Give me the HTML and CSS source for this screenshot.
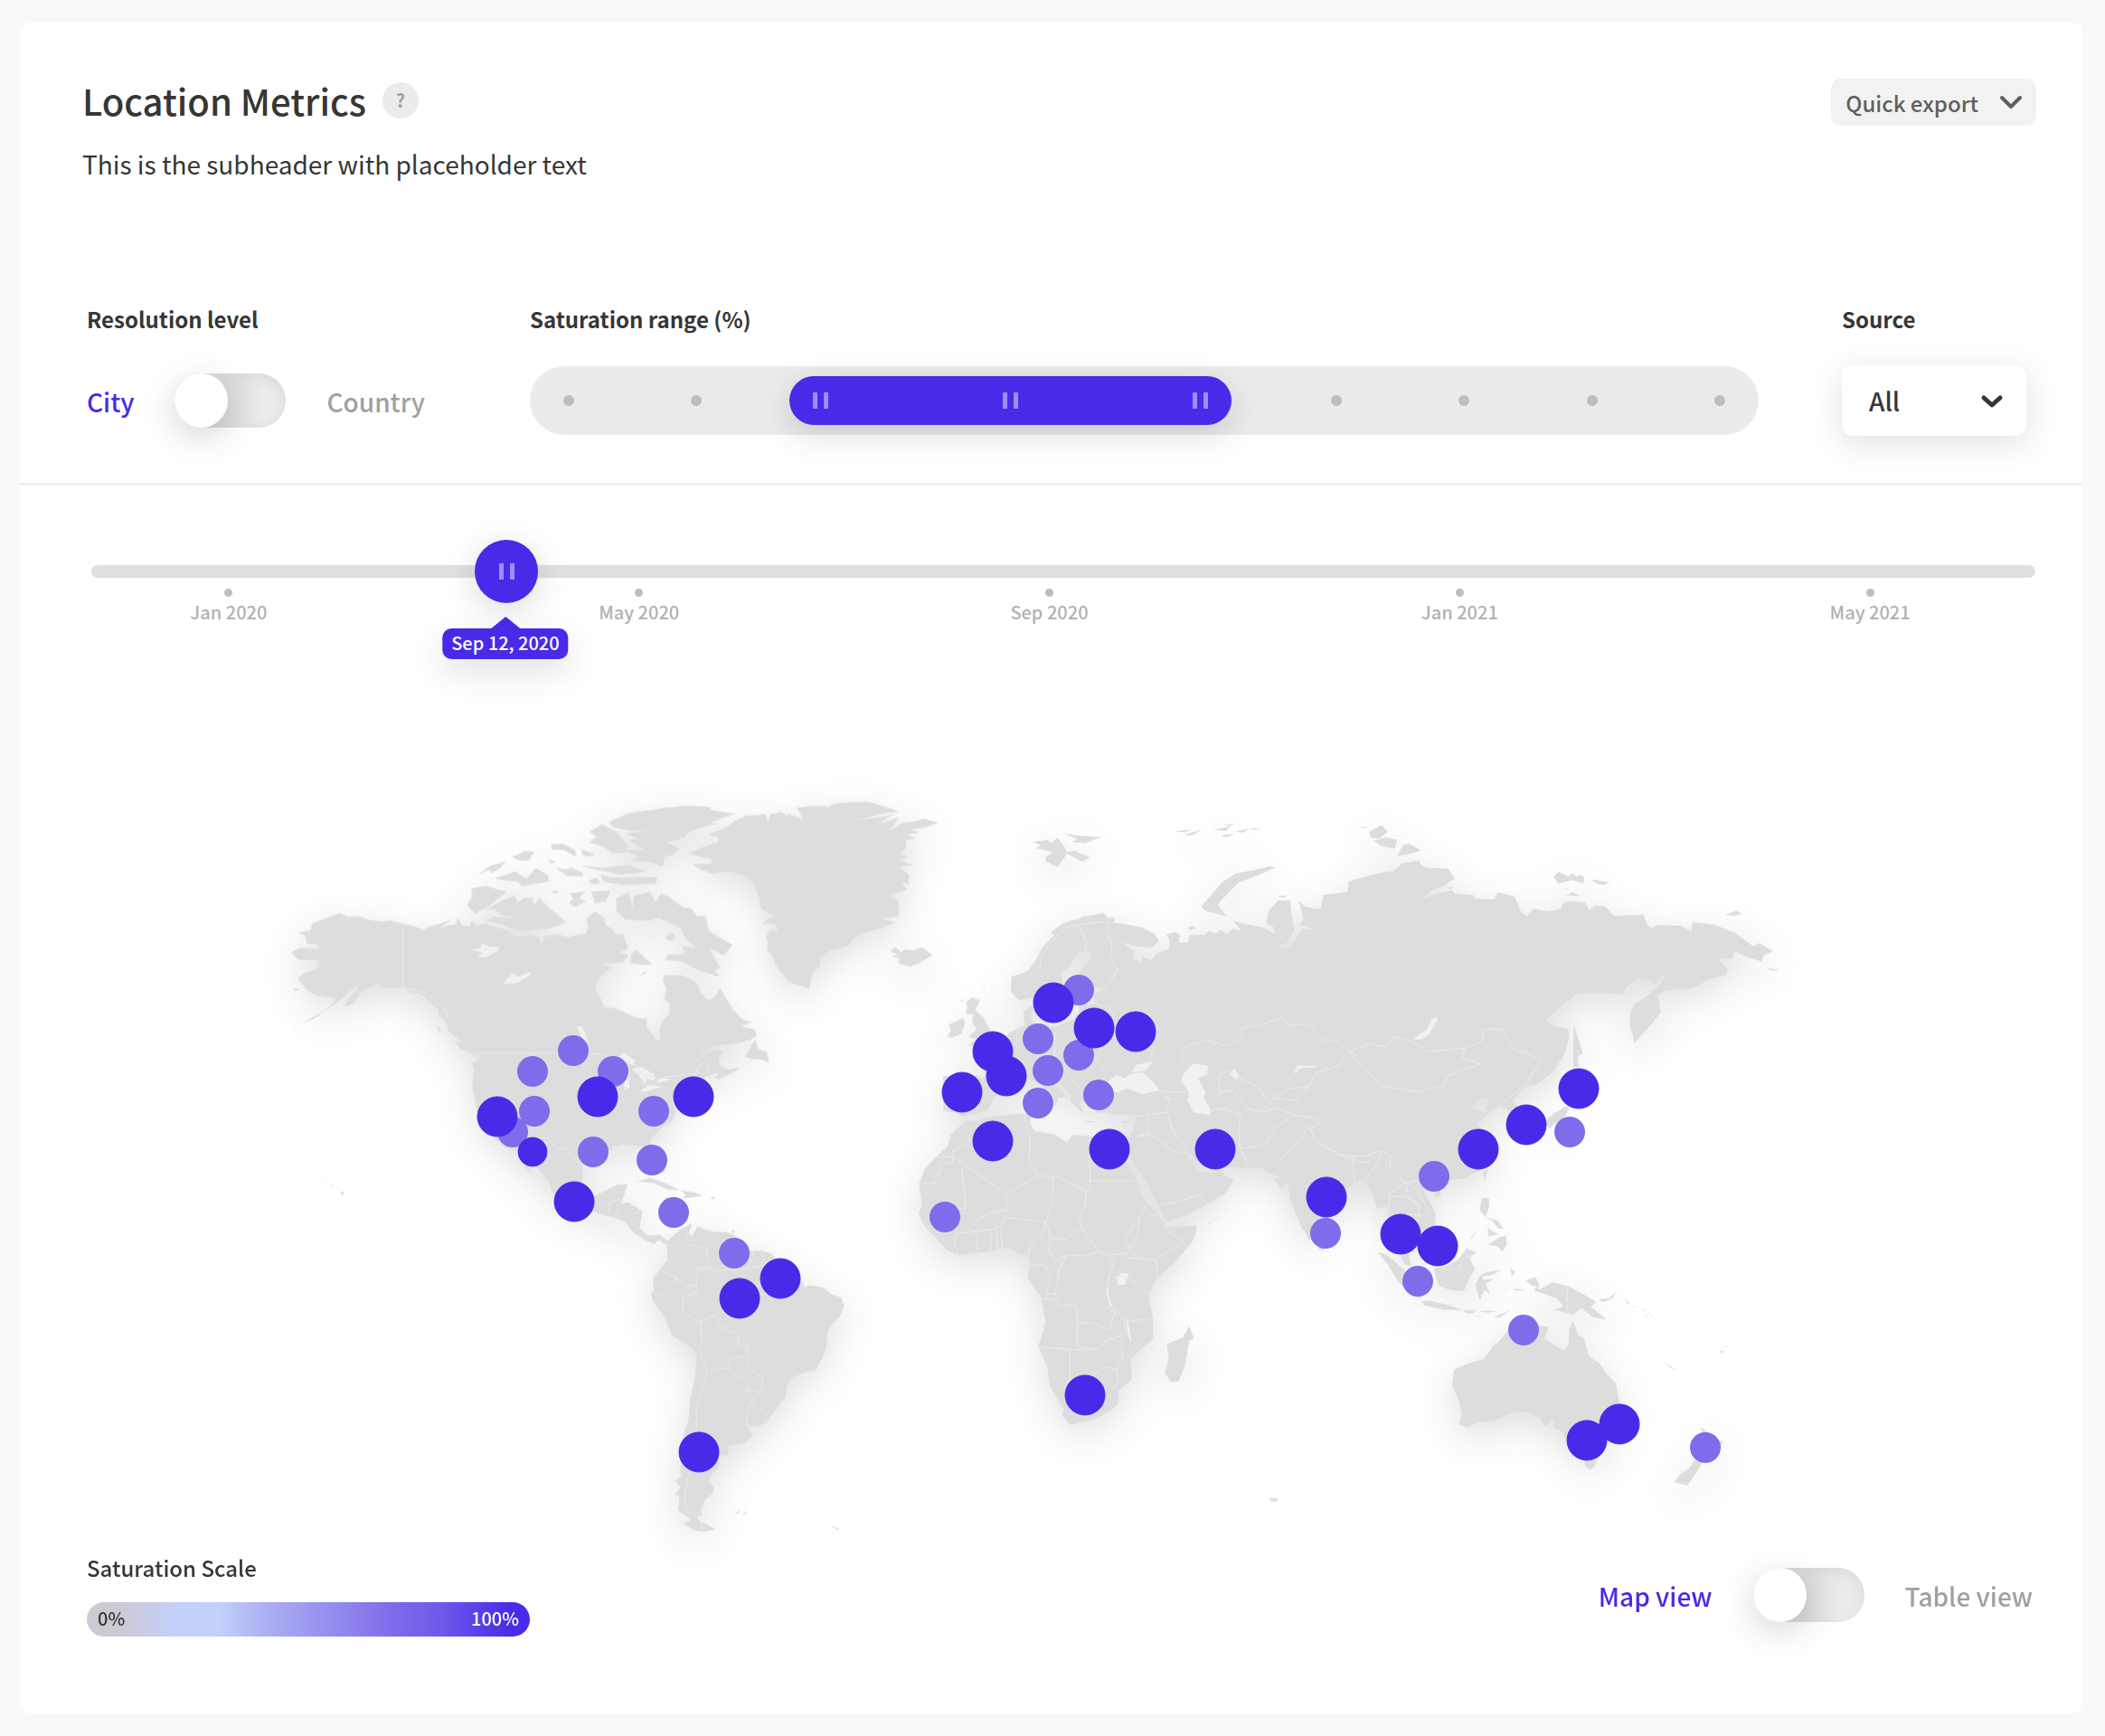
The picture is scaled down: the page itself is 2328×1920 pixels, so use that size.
FILE: index.html
```html
<!DOCTYPE html>
<html lang="en">
<head>
<meta charset="utf-8">
<meta name="viewport" content="width=device-width, initial-scale=1">
<title>Location Metrics</title>
<link rel="stylesheet" href="styles.css">
</head>
<body>
<main class="card">
  <header class="card-header">
    <div class="heading">
      <div class="title-row">
        <h1 class="title">Location Metrics</h1>
        <button class="help" type="button" aria-label="Help">?</button>
      </div>
      <p class="subheader">This is the subheader with placeholder text</p>
    </div>
    <button class="export" type="button">Quick export
      <svg class="chevron" viewBox="0 0 24 14" aria-hidden="true"><path d="M2 2l10 10L22 2"/></svg>
    </button>
  </header>

  <section class="controls">
    <div class="control">
      <h2 class="control-label">Resolution level</h2>
      <div class="control-body switch-row">
        <span class="switch-text switch-text-active">City</span>
        <input class="switch" type="checkbox" role="switch" aria-label="Show countries">
        <span class="switch-text">Country</span>
      </div>
    </div>
    <div class="control">
      <h2 class="control-label" id="range-label">Saturation range (%)</h2>
      <div class="control-body">
        <div class="range" role="group" aria-labelledby="range-label">
          <i class="range-dot"></i><i class="range-dot"></i><i class="range-dot"></i><i class="range-dot"></i><i class="range-dot"></i>
          <i class="range-dot"></i><i class="range-dot"></i><i class="range-dot"></i><i class="range-dot"></i><i class="range-dot"></i>
          <span class="range-fill" style="left:21.1%;width:36%"><i class="grip"></i></span>
          <input class="range-input" type="range" min="0" max="100" step="0.1" value="23.3" aria-label="Minimum saturation">
          <input class="range-input" type="range" min="0" max="100" step="0.1" value="54.6" aria-label="Maximum saturation">
        </div>
      </div>
    </div>
    <div class="control">
      <label class="control-label" for="source">Source</label>
      <div class="control-body">
        <div class="select">
          <select class="select-input" id="source"><option>All</option></select>
          <svg class="chevron chevron-bold select-icon" viewBox="0 0 24 14" aria-hidden="true"><path d="M3 3l9 8 9-8"/></svg>
        </div>
      </div>
    </div>
  </section>

  <section class="timeline">
    <div class="timeline-track">
      <input class="timeline-input" type="range" min="0" max="100" step="0.1" value="20.4" aria-label="Date">
      <output class="timeline-tip" style="left:21.3%">Sep 12, 2020</output>
    </div>
    <ol class="ticks">
      <li class="tick">Jan 2020</li>
      <li class="tick">May 2020</li>
      <li class="tick">Sep 2020</li>
      <li class="tick">Jan 2021</li>
      <li class="tick">May 2021</li>
    </ol>
  </section>

  <svg class="map" viewBox="22 689 2281 1029" role="img" aria-label="World map of saturation by city">
    <g class="land">
      <!-- North America -->
      <g transform="translate(300 860) scale(.39541 .33333)">
        <path d="M190 450L215 462 245 460 270 472 310 478 335 474 372 487 400 493 425 507 440 496 470 486 500 474 470 500 498 490 515 488 522 466 535 490 555 495 560 475 575 490 600 485 640 500 670 512 680 527 700 528 730 520 750 535 755 552 765 528 800 520 830 530 860 522 880 520 887 490 880 470 905 445 930 462 935 490 950 500 965 520 985 520 990 545 1000 565 975 580 1000 588 985 612 920 618 950 630 915 665 905 700 920 730 930 762 960 765 990 780 1020 797 1050 800 1050 830 1065 850 1075 873 1090 868 1085 840 1095 805 1115 785 1115 750 1100 735 1105 700 1095 675 1100 655 1150 657 1175 670 1195 690 1200 715 1222 738 1240 730 1255 697 1275 740 1290 768 1320 805 1345 812 1312 826 1350 835 1358 855 1340 870 1300 882 1240 888 1210 910 1185 945 1215 915 1250 905 1265 912 1250 930 1255 955 1275 968 1308 965 1290 980 1250 1002 1240 995 1255 978 1230 985 1200 1000 1180 1015 1160 1040 1120 1075 1130 1110 1120 1140 1090 1165 1065 1195 1058 1215 1085 1260 1102 1295 1098 1313 1085 1300 1062 1255 1045 1225 1020 1222 985 1215 950 1225 955 1240 920 1230 890 1250 870 1280 870 1335 880 1365 905 1400 940 1397 955 1370 965 1352 995 1350 990 1375 980 1400 970 1415 1000 1410 1040 1440 930 1442 880 1436 840 1425 805 1390 785 1375 778 1345 750 1300 715 1270 705 1262 718 1290 732 1322 715 1300 700 1270 690 1240 650 1225 620 1190 580 1130 572 1085 562 1020 568 965 560 945 580 940 583 920 560 905 540 890 515 860 495 840 490 810 470 790 465 765 440 740 420 715 395 715 372 698 330 697 310 700 300 685 285 690 270 700 250 712 230 750 205 760 215 735 240 705 245 685 262 678 235 690 210 720 190 740 160 765 125 795 90 815 115 795 150 775 175 745 180 730 150 728 125 722 100 705 92 690 75 670 90 650 115 640 135 628 130 605 75 605 57 580 80 565 140 567 125 553 100 550 95 525 75 515 110 507 115 485 150 468Z"/>
        <path d="M560 368L600 360 660 380 630 405 605 430 570 450 548 425 562 395ZM600 440L640 412 680 390 690 415 705 400 730 398 735 425 750 400 775 430 795 450 825 480 790 497 750 505 700 510 670 500 640 485 600 475 620 462 700 467 640 455 625 435ZM583 318L610 295 655 278 640 300 615 318 612 305ZM625 335L680 312 715 335 740 300 775 325 775 345 700 360 690 345 650 340ZM675 265L710 243 735 247 720 275 695 275ZM783 222L815 220 850 240 852 262 820 240 785 238ZM775 272L795 280 780 285ZM798 300L820 305 840 300 870 315 870 328 825 325ZM783 378L805 375 795 385ZM835 385L880 375 860 400 880 410 850 430 832 415 845 402ZM868 238L905 255 885 262 870 255ZM888 340L912 333 920 350 895 353ZM895 378L950 375 935 410 905 418 900 395ZM920 320L945 330 985 332 1080 330 1075 352 980 355 930 345ZM865 293L930 300 960 295 1000 290 1050 312 980 322 930 310ZM890 180L925 155 965 180 1000 225 985 250 955 250 930 230 890 215 910 195ZM945 148L1000 118 1060 108 1100 100 1160 95 1225 98 1230 108 1295 120 1225 150 1250 152 1200 165 1165 182 1155 200 1105 215 1140 235 1125 255 1100 262 1095 295 1060 280 1010 275 1030 262 980 240 1045 240 995 205 1030 205 990 185 1030 180 1085 165 1040 175 1000 175 955 165ZM965 400L1000 382 1010 440 1015 390 1060 380 1075 415 1090 385 1110 395 1150 430 1175 435 1190 460 1215 460 1220 490 1225 510 1290 555 1265 590 1225 565 1255 630 1240 640 1255 660 1195 640 1150 610 1100 605 1110 588 1160 585 1150 560 1190 565 1160 535 1145 500 1085 465 1050 475 990 470 965 440ZM1005 590L1020 570 1065 620 1040 622 1005 615ZM1105 525L1120 513 1132 530 1120 542 1108 538ZM1035 650L1052 642 1040 655ZM1325 925L1345 885 1355 870 1360 900 1385 910 1392 945 1370 935 1345 935ZM515 875L550 890 582 940 560 915 530 900ZM462 825L475 835 472 848ZM1025 1340L1060 1328 1100 1345 1140 1368 1110 1367 1070 1345ZM1145 1370L1180 1375 1208 1388 1175 1392 1150 1397 1160 1385ZM1226 1393L1242 1394 1236 1399ZM193 1372L205 1378 198 1387ZM165 1350L173 1355ZM148 1341L155 1344ZM185 1360L190 1363ZM60 700L80 703 70 708ZM60 830L70 822Z"/>
      </g>
      <!-- Greenland, Iceland, British Isles -->
      <g transform="translate(640 860) scale(.33333)">
        <path d="M515 145L555 127 600 125 620 120 628 150 635 122 670 115 700 132 690 117 745 140 725 100 780 95 835 97 840 88 900 82 960 80 1010 95 1060 112 1000 122 910 143 990 134 1045 122 985 157 1062 132 1032 177 1075 150 1100 148 1150 137 1192 150 1150 165 1100 172 1130 182 1085 190 1118 200 1085 208 1085 235 1065 250 1090 265 1060 275 1110 290 1060 297 1095 320 1095 355 1070 345 1090 372 1016 392 1060 405 1062 460 1000 468 1050 480 985 505 925 520 890 560 840 570 800 595 800 625 775 650 765 700 740 690 700 680 665 640 640 590 625 570 630 545 620 530 635 505 660 510 655 485 610 485 625 470 655 462 605 435 600 400 580 350 550 325 500 310 445 318 405 305 380 288 440 285 440 270 362 252 400 235 465 215 462 195 430 190 490 165Z"/>
        <path d="M1035 575L1050 562 1070 580 1082 570 1110 574 1140 563 1152 572 1172 590 1140 610 1100 627 1060 615 1065 600 1040 592 1060 588ZM1285 745L1305 730 1332 740 1315 770 1345 800 1365 840 1390 860 1330 885 1290 890 1320 870 1295 860 1320 835 1305 810 1310 785 1285 785 1290 760ZM1222 860L1235 840 1228 820 1275 798 1282 815 1270 848 1240 862ZM1268 740L1278 735 1272 745ZM1343 690L1348 692 1345 698Z"/>
      </g>
      <!-- Central and South America -->
      <g transform="translate(680 1240) scale(.33333)">
        <path d="M-110 270L0 215 40 210 30 240 15 290 60 288 90 300 82 355 110 380 150 378 180 400 165 410 145 392 130 408 100 395 60 368 35 335 0 320 -40 310 -90 295Z"/>
        <path d="M172 400L215 360 255 340 245 370 255 385 262 372 275 348 300 360 330 368 370 368 395 378 410 392 450 430 490 430 520 440 535 455 560 480 600 520 625 535 625 550 650 545 690 552 720 575 750 585 760 615 745 650 715 680 705 700 702 750 685 790 665 825 630 832 590 850 570 875 567 915 545 940 530 960 500 1000 475 1013 435 1005 455 1040 435 1068 375 1077 375 1108 345 1110 345 1150 325 1165 308 1195 328 1215 325 1235 300 1255 285 1290 290 1310 270 1310 285 1330 300 1335 335 1355 290 1362 260 1355 225 1335 255 1325 210 1290 215 1245 198 1237 220 1215 200 1195 220 1180 218 1130 225 1050 245 990 250 920 265 860 272 770 240 740 190 712 165 650 125 595 120 572 130 560 125 525 150 490 175 460Z"/>
        <path d="M400 1302L415 1290 410 1302ZM420 1303L440 1294 432 1303ZM718 1343L745 1353 738 1356ZM160 253L180 254 172 258ZM385 365L398 362 395 372Z"/>
      </g>
      <!-- Europe, Africa, Middle East -->
      <g transform="translate(980 900) scale(.33333 .44643)">
        <path d="M415 405L470 390 500 360 520 330 560 300 545 295 580 275 610 265 640 262 650 255 700 250 720 245 735 258 760 258 755 270 800 275 850 282 890 298 905 315 880 332 830 328 780 318 820 340 820 360 850 370 850 355 880 365 900 345 940 335 940 310 930 300 960 293 975 300 970 320 1000 320 1010 300 1060 300 1070 290 1090 298 1110 288 1130 298 1150 285 1180 290 1150 265 1200 275 1250 282 1290 298 1285 280 1262 272 1270 240 1300 215 1340 215 1345 250 1355 290 1330 320 1295 328 1330 333 1360 310 1380 285 1410 290 1420 310 1410 282 1370 275 1385 262 1370 215 1390 230 1425 235 1455 235 1450 205 1530 195 1540 170 1600 165 1600 914 1570 914 1530 925 1500 960 1470 1000 1440 1030 1405 1058 1385 1030 1360 980 1340 940 1335 910 1310 928 1285 905 1310 900 1265 890 1250 878 1170 877 1120 875 1080 868 1050 872 1020 850 985 825 1000 850 1020 870 1040 888 1090 890 1112 880 1120 895 1153 907 1125 940 1060 970 990 995 925 1010 915 985 880 940 860 905 815 860 805 850 800 860 830 905 850 950 880 975 920 1010 925 1025 1032 1020 1020 1055 960 1110 900 1150 870 1190 885 1250 885 1300 810 1350 815 1400 770 1430 770 1460 740 1480 690 1500 610 1513 585 1490 590 1475 545 1420 535 1370 505 1320 530 1260 515 1200 470 1150 480 1110 470 1095 440 1088 400 1075 330 1085 240 1093 200 1080 165 1050 130 1025 108 990 120 970 110 915 130 880 165 850 205 825 215 795 265 760 300 762 340 752 460 742 485 745 475 765 490 785 560 795 600 815 620 795 680 800 760 790 810 800 820 780 830 750 825 745 760 747 735 740 700 740 690 715 640 710 655 742 635 730 615 715 605 690 570 660 555 670 600 700 570 705 562 725 555 700 500 665 475 655 430 690 360 700 335 735 300 742 255 750 225 740 190 735 190 650 300 650 325 655 330 640 285 600 330 590 370 590 400 560 405 545 440 530 460 525 455 490 485 475 490 480 480 510 500 525 560 528 620 510 640 490 640 475 690 470 690 445 745 432 690 430 655 425 640 395 680 360 682 343 640 342 610 375 580 395 590 440 560 480 530 520 500 500 485 455 440 462 415 440Z"/>
        <path d="M1005 1270L1022 1300 1005 1305 990 1370 970 1405 945 1408 925 1385 938 1350 932 1315 960 1305 985 1298ZM488 70L535 65 550 72 568 60 590 80 600 95 625 92 675 108 650 118 600 98 570 132 530 118 530 108 555 95 500 85 515 78ZM595 50L640 55 712 58 660 73 620 70 635 62ZM1290 133L1240 150 1170 170 1130 200 1100 225 1128 253 1060 240 1045 230 1075 205 1115 170 1160 148 1220 140 1275 130ZM960 43L1010 40 990 46ZM990 52L1045 40 1015 54ZM1088 40L1140 32 1130 42ZM1110 54L1155 50 1130 58ZM1160 44L1200 38 1185 46ZM1205 38L1240 36 1225 40ZM1120 28L1155 26 1140 30ZM1000 283L1015 278 1028 284 1010 288ZM660 760L692 763 675 765ZM778 764L805 760 790 768ZM1068 1013L1077 1012 1073 1016ZM1435 1078L1455 1078 1445 1082Z"/>
      </g>
      <!-- Northern and East Asia -->
      <g transform="translate(1280 880) scale(.45918 .33333)">
        <path d="M400 330L460 320 460 285 520 262 570 250 590 225 630 215 635 230 650 240 700 242 715 275 690 300 660 315 635 345 680 322 710 315 715 325 760 330 765 342 812 345 820 320 860 335 875 385 890 402 905 375 940 385 975 375 975 360 990 350 1030 355 1040 380 1055 365 1080 370 1100 400 1170 395 1180 430 1195 442 1200 430 1260 432 1285 450 1290 420 1340 428 1390 455 1435 500 1450 490 1482 515 1460 530 1455 550 1420 535 1390 515 1385 540 1350 542 1375 575 1370 595 1330 610 1285 640 1225 645 1205 660 1212 718 1195 750 1175 780 1150 820 1138 760 1140 715 1150 690 1185 660 1210 625 1230 592 1215 595 1200 625 1185 608 1155 610 1130 635 1120 660 1080 655 1010 657 980 690 935 745 955 765 990 775 992 800 980 860 950 920 910 960 885 965 855 1015 875 1040 875 1075 850 1070 845 1040 820 1030 800 1050 790 1040 800 1000 785 1005 755 1030 765 1042 800 1050 770 1090 795 1130 815 1150 810 1200 780 1240 740 1270 700 1275 660 1295 640 1300 630 1320 665 1380 668 1420 640 1460 570 1460 550 1360 530 1370 520 1330 500 1275 450 1300 400 1345 390 1440 350 1440 320 1340 315 1280 280 1200Z"/>
        <path d="M1003 762L1012 800 1024 855 1012 865 1015 900 1002 900 1002 820ZM940 1070L955 1055 985 1030 992 1040 975 1075 955 1090 945 1105 935 1090ZM783 1250L797 1238 788 1275ZM665 1320L680 1310 683 1325 672 1334ZM510 120L540 98 555 120 535 142 515 140ZM522 150L550 138 577 147 572 175 540 168ZM577 200L592 165 607 160 635 182 600 195ZM955 270L965 253 990 268 1000 258 1010 270 1018 262 1028 270 1025 290 1000 280 965 292ZM1045 278L1088 288 1075 296 1058 292ZM985 330L1000 320 1016 333ZM1370 395L1395 382 1408 392 1390 398ZM1468 573L1495 578 1485 582ZM490 104L503 105 497 109ZM293 336L303 330 310 338ZM80 435L90 437 80 445ZM982 311L990 312ZM697 305L712 303 708 312Z"/>
      </g>
      <!-- South-East Asia and Oceania -->
      <g transform="translate(1360 1200) scale(.39541 .33333)">
        <path d="M380 240L530 300 545 360 575 420 575 470 545 500 510 500 500 560 508 602 490 595 472 550 460 440 440 400 412 410 405 370 380 320ZM415 555L440 565 485 610 530 680 535 708 510 700 470 650 445 600ZM535 718L560 716 610 730 650 746 600 745 545 732ZM655 748L690 747 680 757 660 757ZM700 750L745 750 720 756ZM740 770L782 748 755 772ZM688 766L708 771ZM432 612L442 624ZM570 610L600 605 640 580 662 542 690 555 670 572 685 612 670 640 655 682 620 682 585 665ZM700 632L718 622 758 614 735 630 705 636 712 648 738 643 715 660 728 692 712 680 700 712 692 690 688 660ZM785 608L798 620 790 636ZM795 676L825 682 800 682ZM770 677L782 680ZM828 648L855 638 865 660 862 680 905 655 950 670 990 695 1025 720 1010 735 1030 755 1052 778 1015 770 985 740 960 762 905 745 935 735 915 708 850 680 860 670 840 662ZM1032 712L1060 708 1080 688 1070 708 1045 720ZM705 376L725 376 725 405 715 438 700 415ZM718 440L750 450 765 478 750 475 735 450ZM722 475L735 485 750 495 725 502ZM755 505L772 500 775 530 762 552 748 535 723 530ZM693 482L672 515 675 505Z"/>
        <path d="M628 945L665 925 710 910 730 880 735 865 750 855 790 800 850 795 893 803 880 840 910 865 935 882 948 860 950 810 960 783 975 830 990 840 1005 900 1035 925 1055 960 1080 990 1088 1045 1090 1100 1050 1190 1000 1230 945 1185 930 1150 905 1135 908 1105 885 1135 865 1100 830 1085 800 1085 775 1095 740 1115 690 1120 665 1137 640 1125 650 1095 640 1040 622 1000ZM992 1245L1028 1245 1020 1265 1008 1277 995 1265ZM1318 1136L1333 1150 1345 1180 1380 1183 1362 1220 1330 1240 1320 1215 1330 1180ZM1300 1245L1322 1252 1308 1280 1280 1328 1243 1318 1262 1290 1285 1272ZM1217 920L1247 945 1235 940ZM1368 884L1382 882 1375 889ZM1385 868L1397 864ZM1106 710L1120 728 1112 724ZM1122 732L1133 738ZM1150 742L1163 750ZM1172 752L1182 768ZM1162 766L1173 771ZM1185 776L1193 783ZM112 1370L134 1372 130 1382 115 1380ZM248 540L268 540 258 550Z"/>
      </g>
    </g>

    <g class="water">
      <path transform="translate(300 860) scale(.39541 .33333)" d="M560 572L585 565 590 552 610 560 640 562 632 575 600 597 578 595 590 580ZM648 683L675 648 690 660 728 643 725 655 690 680 665 685ZM855 825L870 825 887 880 875 885ZM965 930L985 913 1018 940 1012 955 985 940ZM985 990L1000 975 1002 1030 988 1035ZM1008 968L1035 960 1072 985 1070 1005 1050 1000 1045 1018 1030 990ZM1035 1038L1055 1020 1092 1025 1045 1043ZM1078 1010L1090 998 1122 1000 1085 1012Z"/>
      <path transform="translate(980 900) scale(.33333 .44643)" d="M745 690L730 665 765 648 790 655 810 645 850 640 880 660 907 685 850 695 800 680 770 690ZM815 640L830 622 887 613 860 637ZM990 640L1020 618 1068 625 1065 645 1035 655 1060 690 1055 705 1075 730 1075 747 1020 740 1000 710 1005 690 978 660ZM1140 645L1155 630 1172 650 1160 658ZM1352 642L1365 624 1427 624 1427 629 1375 630 1360 642ZM765 1150L780 1138 805 1140 792 1167 768 1167ZM732 1165L740 1195 755 1228 745 1220 730 1190ZM795 1245L806 1270 815 1310 805 1300Z"/>
      <path transform="translate(1280 880) scale(.45918 .33333)" d="M673 732L675 745 655 790 635 810 616 808 650 775 660 745Z"/>
    </g>

    <g class="borders">
      <path transform="translate(300 860) scale(.39541 .33333)" d="M367 487V697L400 705 435 715 460 745 490 775 495 800M583 915H895L925 920 980 930 1020 955 1040 985 1080 1000 1125 990 1185 985 1205 945 1220 950 1222 980M690 1203L745 1195 770 1195 805 1235 825 1228 850 1270 870 1290M945 1440L948 1405 975 1400"/>
      <path transform="translate(680 1240) scale(.33333)" d="M235 370L245 410 305 425 310 470 330 500 350 495 430 490 465 485 490 480 495 430M460 430L450 470 465 485M150 495L200 515 230 545 270 545 275 490 310 487M130 570L150 575 195 535 205 515M270 545V570L225 585V630L265 660 285 665 290 740 280 765 305 830 350 820 375 822 445 870 435 898 485 895 490 850 443 820 440 745 412 740 405 705 350 680 335 645 285 662M375 822L385 785 437 783M305 830L295 870 270 950 270 1030M498 880L445 940 435 1005M455 940L500 970 498 1000M245 1165L230 1250 240 1300 285 1300M35 320L85 295M65 360L82 355M288 1310V1360M0 320L15 290"/>
      <path transform="translate(980 900) scale(.33333 .44643)" d="M110 915H160V895H178V865H222V850L165 850M222 850L400 943 505 895 475 865 478 800 465 770 460 742M222 850V835L280 810 275 795M250 878L265 978 170 980M505 895L550 902 555 895 665 935H676V800M676 910H825M665 935L660 975 640 1000 650 1030 700 1080 735 1093 795 1090 830 1060 840 1000 865 970M555 895L550 965 530 1010 545 1050 590 1055 640 1030M400 943V980L340 990 295 1010 270 1030 300 1035 350 1030 380 1020 395 1000 480 1008 530 1010M530 1010L520 1040 480 1070 470 1095M545 1050L540 1080 560 1110 600 1093 660 1095 700 1085M480 1118H530L545 1150 530 1190 560 1190 575 1130 600 1093M515 1203L565 1203 580 1220 630 1215 635 1260 690 1262 740 1278 760 1235 740 1230 735 1160 755 1110 735 1093M635 1260V1320L700 1328 740 1300 800 1290 785 1245 755 1228M505 1320L620 1328 700 1328M610 1330V1400L590 1420 600 1445M610 1400L660 1412 720 1370 765 1375 785 1345 780 1310 740 1300M765 1375L770 1410 755 1425M803 1258L885 1250M870 1190L800 1145 755 1150M795 1090L805 1100 895 1105 900 1150M895 1105L985 1060 920 1025M840 1000L790 1055 830 1095M865 990L920 1000M240 1093L225 1060 235 1040 300 1035 305 1090M345 1030L350 1083M365 1028L370 1080M380 1025L385 1078M130 1025L165 1015 200 1040M920 970L1040 945 1095 905M1040 945L1065 970M830 750L865 745 930 740 960 800 1000 830M830 800L880 795 960 840 1000 840M865 745L870 790 830 800M510 390L515 350 570 300 600 280 640 275 665 320 660 345M640 275L700 268 740 270 735 300 750 330 745 360 770 385 740 420M690 470L740 480 755 500 720 530M620 560L600 580 560 600M440 530L430 570 460 590M460 650L500 620 560 620 590 650M600 640L630 670 650 690M560 540L560 600M690 600L730 640M720 560L800 550 885 590 870 615M907 685L960 690 1000 690M907 685L930 705 970 710M930 740L940 710 930 705M975 600L1000 575 1060 560 1130 575 1180 555V530L1240 525 1310 505 1340 525 1400 520 1450 560 1500 565 1535 585 1560 600M975 600L1000 625M1075 735L1120 730 1175 745 1170 790 1175 830 1200 870M1105 690V645L1150 635M1105 690L1150 685 1200 730 1240 740M1172 655L1230 675 1265 710 1340 680 1400 678M1240 740L1300 730 1350 745 1290 780 1255 820 1175 830M1300 860L1360 820 1400 780 1350 745M1240 740L1290 705 1360 710M1400 780L1440 770 1420 755 1350 745M1410 780L1420 810 1500 840 1560 860M1360 710L1400 678 1430 640 1500 625 1535 585"/>
      <path transform="translate(1280 880) scale(.45918 .33333)" d="M462 850L510 822 550 835 570 800 620 820 650 850 740 838 735 872 778 890 700 930 690 960 628 982 545 965 495 905 462 850M740 838L782 815 785 775 830 775 858 840 925 875 900 930 885 965M820 1030L850 1000 885 960M395 1160L440 1195 500 1195 540 1178 562 1195 560 1240 595 1285 640 1275M470 1200L475 1290 500 1275M475 1215H510M500 1275L530 1220 540 1178M595 1285L560 1320 555 1375 575 1395M600 1280L625 1310 640 1340 655 1390H590"/>
      <path transform="translate(1360 1200) scale(.39541 .33333)" d="M944 668V752M595 612H640L655 572H678M490 320L500 370 530 400M445 370L490 370 530 400V435H510V455"/>
    </g>

    <g class="dots-low">
      <circle cx="634" cy="1162" r="17"/><circle cx="589" cy="1185" r="17"/><circle cx="678" cy="1185" r="17"/>
      <circle cx="591" cy="1229" r="17"/><circle cx="723" cy="1229" r="17"/><circle cx="567" cy="1252" r="17"/>
      <circle cx="656" cy="1274" r="17"/><circle cx="721" cy="1283" r="17"/><circle cx="745" cy="1341" r="17"/>
      <circle cx="812" cy="1386" r="17"/><circle cx="1193" cy="1095" r="17"/><circle cx="1148" cy="1149" r="17"/>
      <circle cx="1193" cy="1167" r="17"/><circle cx="1159" cy="1184" r="17"/><circle cx="1148" cy="1220" r="17"/>
      <circle cx="1215" cy="1211" r="17"/><circle cx="1045" cy="1346" r="17"/><circle cx="1466" cy="1364" r="17"/>
      <circle cx="1736" cy="1252" r="17"/><circle cx="1586" cy="1301" r="17"/><circle cx="1568" cy="1417" r="17"/>
      <circle cx="1685" cy="1471" r="17"/><circle cx="1886" cy="1601" r="17"/>
    </g>
    <g class="dots-high">
      <circle cx="589" cy="1274" r="16"/>
      <circle cx="661" cy="1213" r="22"/><circle cx="767" cy="1213" r="22"/><circle cx="550" cy="1235" r="22"/>
      <circle cx="635" cy="1329" r="22"/><circle cx="863" cy="1414" r="22"/><circle cx="818" cy="1436" r="22"/>
      <circle cx="773" cy="1606" r="22"/><circle cx="1165" cy="1109" r="22"/><circle cx="1210" cy="1137" r="22"/>
      <circle cx="1256" cy="1141" r="22"/><circle cx="1098" cy="1163" r="22"/><circle cx="1113" cy="1190" r="22"/>
      <circle cx="1064" cy="1208" r="22"/><circle cx="1098" cy="1262" r="22"/><circle cx="1227" cy="1271" r="22"/>
      <circle cx="1344" cy="1271" r="22"/><circle cx="1467" cy="1324" r="22"/><circle cx="1200" cy="1543" r="22"/>
      <circle cx="1746" cy="1204" r="22"/><circle cx="1688" cy="1244" r="22"/><circle cx="1635" cy="1271" r="22"/>
      <circle cx="1549" cy="1365" r="22"/><circle cx="1590" cy="1378" r="22"/><circle cx="1791" cy="1575" r="22"/>
      <circle cx="1755" cy="1593" r="22"/>
    </g>
  </svg>

  <footer class="card-footer">
    <div class="legend">
      <h2 class="legend-title">Saturation Scale</h2>
      <div class="legend-bar"><span>0%</span><span class="legend-max">100%</span></div>
    </div>
    <div class="switch-row">
      <span class="switch-text switch-text-active">Map view</span>
      <input class="switch" type="checkbox" role="switch" aria-label="Show table view">
      <span class="switch-text">Table view</span>
    </div>
  </footer>
</main>
</body>
</html>
```
FILE: styles.css
```css
:root {
  --accent: #482ae8;
  --ink: #363636;
  --muted: #a0a0a0;
  --track: #ebebeb;
  --grip: linear-gradient(to right, #9c8ff3 5px, transparent 5px, transparent 12px, #9c8ff3 12px);
}

* {
  box-sizing: border-box;
}

body {
  margin: 0;
  padding: 25px 25px 25px 22px;
  min-height: 100vh;
  background: #f9f9f9;
  color: var(--ink);
  font-family: "Noto Sans CJK SC", "Noto Sans", sans-serif;
}

h1, h2, p, ol {
  margin: 0;
  padding: 0;
}

button, select, input {
  margin: 0;
  border: 0;
  font: inherit;
  color: inherit;
}

.card {
  padding-bottom: 85px;
  border-radius: 12px;
  background: #fff;
}

/* Header */
.card-header {
  display: flex;
  justify-content: space-between;
  align-items: flex-start;
  padding: 56px 51px 0 69px;
}

.title-row {
  display: flex;
  align-items: center;
  gap: 18px;
  height: 60px;
}

.title {
  font-size: 40px;
  font-weight: 500;
  line-height: 60px;
}

.help {
  width: 40px;
  height: 40px;
  padding: 0;
  border-radius: 50%;
  background: var(--track);
  color: var(--muted);
  font-size: 20px;
  font-weight: 700;
  line-height: 40px;
}

.subheader {
  margin-top: 20px;
  font-size: 28px;
  line-height: 40px;
}

.export {
  display: flex;
  align-items: center;
  gap: 24px;
  height: 52px;
  margin-top: 6px;
  padding: 0 16px;
  border-radius: 10px;
  background: #f2f2f2;
  color: #5f5f5f;
  font-size: 24px;
  font-weight: 500;
}

.chevron {
  width: 24px;
  height: 14px;
  overflow: visible;
  fill: none;
  stroke: currentColor;
  stroke-width: 4;
  stroke-linecap: round;
  stroke-linejoin: round;
}

.chevron-bold {
  stroke-width: 5;
}

/* Filter controls */
.controls {
  display: grid;
  grid-template-columns: 398px 1fr 204px;
  column-gap: 92px;
  padding: 136px 62px 52px 74px;
  border-bottom: 3px solid #efefef;
}

.control-label {
  display: block;
  margin-bottom: 35px;
  font-size: 24px;
  font-weight: 700;
  line-height: 32px;
}

.control-body {
  height: 78px;
  align-content: center;
}

.switch-row {
  display: flex;
  align-items: center;
  gap: 45px;
}

.switch-text {
  padding-top: 2px;
  color: var(--muted);
  font-size: 28px;
  font-weight: 500;
  line-height: 40px;
  white-space: nowrap;
}

.switch-text-active {
  color: var(--accent);
}

.switch {
  appearance: none;
  flex: none;
  width: 123px;
  height: 60px;
  border-radius: 30px;
  background: linear-gradient(to right, #dcdce0 45%, #e2e2e2 60%, #ececec 80%);
  box-shadow: inset 0 4px 16px #d8d8d8;
}

.switch::before {
  content: "";
  display: block;
  width: 59px;
  height: 60px;
  border-radius: 50%;
  background: #fff;
  box-shadow: 0 10px 36px rgba(0, 0, 0, .17);
}

.range {
  position: relative;
  display: flex;
  justify-content: space-between;
  align-items: center;
  height: 76px;
  padding: 0 37px;
  border-radius: 38px;
  background: var(--track);
}

.range-dot {
  width: 12px;
  height: 12px;
  border-radius: 50%;
  background: #bdbdbf;
}

.range-fill {
  position: absolute;
  top: 11px;
  bottom: 11px;
  display: flex;
  justify-content: center;
  align-items: center;
  border-radius: 27px;
  background: var(--accent);
  box-shadow: 0 10px 36px rgba(0, 0, 0, .15);
}

.grip {
  width: 17px;
  height: 18px;
  background: var(--grip);
}

.range-input {
  position: absolute;
  inset: 0;
  width: 100%;
  height: 100%;
  appearance: none;
  background: transparent;
  pointer-events: none;
}

.range-input::-webkit-slider-thumb {
  appearance: none;
  width: 17px;
  height: 18px;
  background: var(--grip);
  pointer-events: auto;
}

.select {
  position: relative;
  height: 78px;
}

.select-input {
  appearance: none;
  width: 100%;
  height: 100%;
  padding: 0 60px 0 30px;
  border-radius: 12px;
  background: #fff;
  box-shadow: 0 8px 36px rgba(0, 0, 0, .12);
  font-size: 28px;
  font-weight: 500;
}

.select-icon {
  position: absolute;
  top: 33px;
  right: 26px;
  pointer-events: none;
}

/* Timeline */
.timeline {
  padding-top: 60px;
}

.timeline-track {
  position: relative;
  height: 70px;
  margin: 0 52px 0 79px;
}

.timeline-input {
  display: block;
  width: 100%;
  height: 70px;
  appearance: none;
  background: transparent;
}

.timeline-input::-webkit-slider-runnable-track {
  height: 14px;
  border-radius: 7px;
  background: #e0e0e0;
}

.timeline-input::-webkit-slider-thumb {
  appearance: none;
  width: 70px;
  height: 70px;
  margin-top: -28px;
  border-radius: 50%;
  background: var(--grip) center / 17px 18px no-repeat, var(--accent);
  box-shadow: 0 8px 36px rgba(0, 0, 0, .15);
}

.timeline-tip {
  position: absolute;
  top: 98px;
  height: 34px;
  padding: 0 10px;
  border-radius: 10px;
  background: var(--accent);
  box-shadow: 0 14px 36px rgba(0, 0, 0, .12);
  color: #fff;
  font-size: 20px;
  font-weight: 500;
  line-height: 32px;
  white-space: nowrap;
  transform: translateX(-50%);
}

.timeline-tip::before {
  content: "";
  position: absolute;
  bottom: 100%;
  left: 50%;
  border: solid transparent;
  border-width: 0 16px 13px;
  border-bottom-color: var(--accent);
  transform: translateX(-50%);
}

.ticks {
  display: grid;
  grid-template-columns: repeat(5, 1fr);
  margin-top: -16px;
  padding: 0 8px 0 4px;
  list-style: none;
}

.tick {
  color: #b2b2b2;
  font-size: 20px;
  font-weight: 500;
  line-height: 24px;
  text-align: center;
}

.tick::before {
  content: "";
  display: block;
  width: 9px;
  height: 9px;
  margin: 0 auto 5px;
  border-radius: 50%;
  background: #bdbdbf;
}

/* Map */
.map {
  display: block;
  width: 100%;
  height: auto;
  overflow: visible;
}

.land {
  fill: #ddd;
  stroke: #ddd;
  stroke-linejoin: round;
  filter: drop-shadow(0 12px 20px rgba(0, 0, 0, .12));
}

.water {
  fill: #f1f1f1;
}

.borders {
  fill: none;
  stroke: #ebebeb;
}

.borders path {
  vector-effect: non-scaling-stroke;
}

.dots-low {
  fill: #7e6dea;
}

.dots-high {
  fill: var(--accent);
  stroke: var(--accent);
}

/* Footer */
.card-footer {
  display: flex;
  justify-content: space-between;
  align-items: center;
  padding: 0 55px 0 74px;
}

.legend {
  width: 490px;
}

.legend-title {
  margin-bottom: 22px;
  font-size: 24px;
  font-weight: 500;
  line-height: 32px;
}

.legend-bar {
  display: flex;
  justify-content: space-between;
  height: 38px;
  padding: 0 12px;
  border-radius: 19px;
  background: linear-gradient(to right, #cccad3 6%, #c4d0f8 20%, #c2d0fa 30%, #adb0f3 40%, #9690ef 54%, #7b6ae9 70%, #6b5aeb 80%, #482ae8 96%);
  font-size: 20px;
  font-weight: 500;
  line-height: 36px;
}

.legend-max {
  color: #fff;
}
```
